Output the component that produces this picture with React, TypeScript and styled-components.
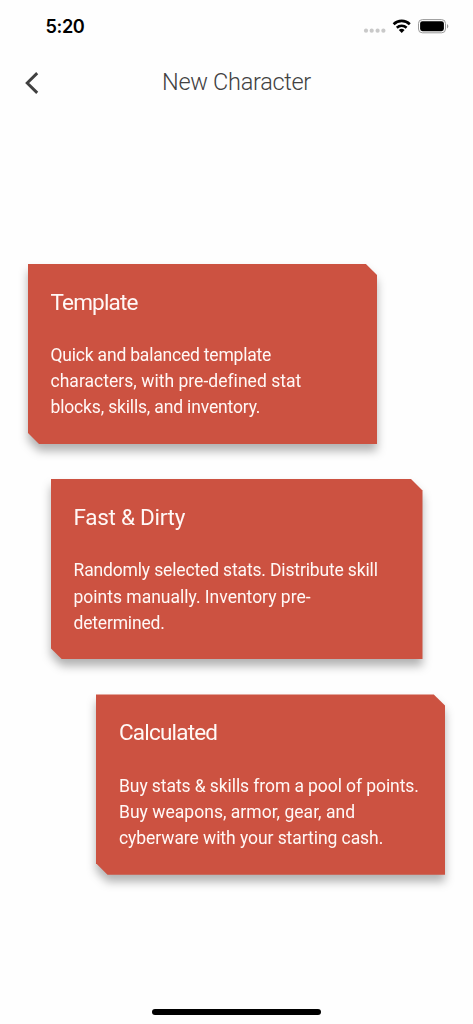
import styled, { createGlobalStyle } from "styled-components";

type Line = { text: string; spacing: number };

type CardData = {
  title: string;
  titleSpacing: number;
  left: number;
  width: number;
  lines: Line[];
};

const cards: CardData[] = [
  {
    title: "Template",
    titleSpacing: -0.8,
    left: 27.5,
    width: 349.5,
    lines: [
      { text: "Quick and balanced template", spacing: -0.2 },
      { text: "characters, with pre-defined stat", spacing: 0.03 },
      { text: "blocks, skills, and inventory.", spacing: -0.16 },
    ],
  },
  {
    title: "Fast & Dirty",
    titleSpacing: -0.28,
    left: 50.5,
    width: 372,
    lines: [
      { text: "Randomly selected stats. Distribute skill", spacing: -0.15 },
      { text: "points manually. Inventory pre-", spacing: 0 },
      { text: "determined.", spacing: -0.18 },
    ],
  },
  {
    title: "Calculated",
    titleSpacing: -0.8,
    left: 96,
    width: 349.3,
    lines: [
      { text: "Buy stats & skills from a pool of points.", spacing: -0.08 },
      { text: "Buy weapons, armor, gear, and", spacing: 0.03 },
      { text: "cyberware with your starting cash.", spacing: -0.06 },
    ],
  },
];

const StatusIcons = () => (
  <svg width="86" height="20" viewBox="0 0 86 20">
    <g fill="#c9c9c9">
      <circle cx="3" cy="14.7" r="2.1" />
      <circle cx="8.7" cy="14.7" r="2.1" />
      <circle cx="14.6" cy="14.7" r="2.1" />
      <circle cx="20.4" cy="14.7" r="2.1" />
    </g>
    <g fill="none" stroke="#000" strokeWidth="2.6">
      <path d="M30.6 8.2a11.6 11.6 0 0 1 16.2 0" />
      <path d="M33.8 11.7a7.2 7.2 0 0 1 9.8 0" />
    </g>
    <path d="M35.8 14.1a4.2 4.2 0 0 1 5.8 0l-2.9 3z" />
    <rect x="55.5" y="3.6" width="27" height="13.2" rx="3.8" fill="none" stroke="#999" strokeWidth="1" />
    <rect x="57.1" y="5.2" width="23.8" height="10" rx="2.4" />
    <path d="M84 8.1v4.4c1.8-.8 1.8-3.6 0-4.4z" fill="#999" />
  </svg>
);

const App = () => {
  return (
    <>
      <GlobalStyle />
      <Screen>
        <StatusBar>
          <Time>5:20</Time>
          <StatusIcons />
        </StatusBar>
        <Header>
          <BackButton aria-label="Back">
            <svg width="14" height="24" viewBox="0 0 14 24">
              <path d="M12.2 2.1 2.2 12l10 9.9" fill="none" stroke="#404040" strokeWidth="2.9" />
            </svg>
          </BackButton>
          <Title>New Character</Title>
        </Header>
        <CardList>
          {cards.map((card) => (
            <CardShadow key={card.title} $left={card.left} $width={card.width}>
              <Card>
                <CardTitle $spacing={card.titleSpacing}>{card.title}</CardTitle>
                <Description>
                  {card.lines.map((line) => (
                    <TextLine key={line.text} $spacing={line.spacing}>
                      {line.text}
                    </TextLine>
                  ))}
                </Description>
              </Card>
            </CardShadow>
          ))}
        </CardList>
        <HomeIndicator />
      </Screen>
    </>
  );
};

export default App;

const GlobalStyle = createGlobalStyle`
  * {
    box-sizing: border-box;
  }

  body {
    margin: 0;
    background: #fefefe;
  }
`;

const Screen = styled.main`
  display: flex;
  flex-direction: column;
  width: 473px;
  height: 1024px;
  overflow: hidden;
  background: #fefefe;
  font-family: Roboto, sans-serif;
`;

const StatusBar = styled.div`
  display: flex;
  justify-content: space-between;
  align-items: center;
  height: 52px;
  padding: 0 23.7px 0 45.5px;
`;

const Time = styled.span`
  font-family: Inter, sans-serif;
  font-size: 18.2px;
  font-weight: 600;
  line-height: 20px;
  letter-spacing: -0.4px;
`;

const Header = styled.header`
  display: grid;
  grid-template-columns: 80px 1fr 80px;
  align-items: center;
  height: 60px;
`;

const BackButton = styled.button`
  display: flex;
  justify-self: start;
  margin: 1px 0 0 25px;
  padding: 0;
  border: 0;
  background: none;
`;

const Title = styled.h1`
  margin: 0;
  color: #414141;
  font-size: 23.5px;
  font-weight: 300;
  letter-spacing: -0.3px;
  text-align: center;
  white-space: nowrap;
`;

const CardList = styled.section`
  display: flex;
  flex: 1;
  flex-direction: column;
  gap: 35px;
  padding-top: 151.6px;
`;

const CardShadow = styled.div<{ $left: number; $width: number }>`
  width: ${(props) => props.$width}px;
  margin-left: ${(props) => props.$left}px;
  filter: drop-shadow(0 7px 5px rgba(0, 0, 0, 0.3));
`;

const Card = styled.article`
  height: 180.4px;
  padding: 23px;
  background: #cc5241;
  color: #fff8f6;
  clip-path: polygon(0 0, calc(100% - 11.5px) 0, 100% 11.5px, 100% 100%, 11.5px 100%, 0 calc(100% - 11.5px));
`;

const CardTitle = styled.h2<{ $spacing: number }>`
  margin: 0 0 25.4px;
  font-size: 22.5px;
  font-weight: 400;
  line-height: 30px;
  letter-spacing: ${(props) => props.$spacing}px;
`;

const Description = styled.p`
  margin: 0;
  font-size: 17.5px;
  line-height: 26.2px;
`;

const TextLine = styled.span<{ $spacing: number }>`
  display: block;
  white-space: nowrap;
  letter-spacing: ${(props) => props.$spacing}px;
`;

const HomeIndicator = styled.div`
  flex: none;
  align-self: center;
  width: 169px;
  height: 6px;
  margin-bottom: 9.5px;
  border-radius: 3px;
  background: #000;
`;
